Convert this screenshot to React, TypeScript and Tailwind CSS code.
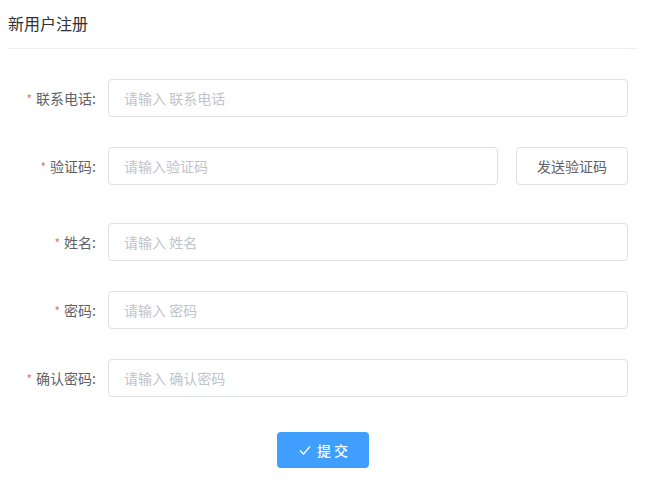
import React from "react";

const font = { fontFamily: '"Noto Sans CJK SC", "Noto Sans", sans-serif' };

function Row({ label, placeholder, extra, className = "" }: { label: string; placeholder: string; extra?: React.ReactNode; className?: string }) {
  return (
    <div className={"flex items-center h-[38px] " + className}>
      <label className="w-[100px] pr-[12px] text-right text-[14px] leading-[38px] text-[#606266] whitespace-nowrap">
        <span className="text-[#f56c6c] mr-[4px] text-[12px]">*</span>
        {label}:
      </label>
      <div className="flex flex-1 items-center gap-[18px]">
        <input
          className="flex-1 h-[38px] min-w-0 rounded-[4px] border border-[#dcdfe6] bg-white px-[15px] text-[14px] text-[#606266] outline-none placeholder:text-[#c0c4cc]"
          placeholder={placeholder}
        />
        {extra}
      </div>
    </div>
  );
}

export default function App() {
  return (
    <div className="min-h-[495px] bg-white pl-[8px] pr-[20px]" style={font}>
      <div className="w-[630px] h-[49px] pt-[13px] border-b border-[#ebeef5] text-[16px] leading-[20px] text-[#303133]">
        新用户注册
      </div>
      <div className="mt-[30px] w-[620px]">
        <Row label="联系电话" placeholder="请输入 联系电话" className="mb-[30px]" />
        <Row
          label="验证码"
          placeholder="请输入验证码"
          className="mb-[38px]"
          extra={
            <button className="w-[112px] h-[38px] rounded-[4px] border border-[#dcdfe6] bg-white text-[14px] text-[#606266]">
              发送验证码
            </button>
          }
        />
        <Row label="姓名" placeholder="请输入 姓名" className="mb-[30px]" />
        <Row label="密码" placeholder="请输入 密码" className="mb-[30px]" />
        <Row label="确认密码" placeholder="请输入 确认密码" />
        <div className="flex justify-center mt-[35px] pl-[10px]">
          <button className="flex items-center justify-center w-[92px] h-[36px] rounded-[4px] bg-[#409eff] text-white text-[14px] font-medium">
            <svg width="14" height="14" viewBox="0 0 14 14" fill="none" className="mr-[5px]">
              <path d="M2 7.5 L5.5 11 L12 3.5" stroke="white" strokeWidth="1.3" />
            </svg>
            提 交
          </button>
        </div>
      </div>
    </div>
  );
}
